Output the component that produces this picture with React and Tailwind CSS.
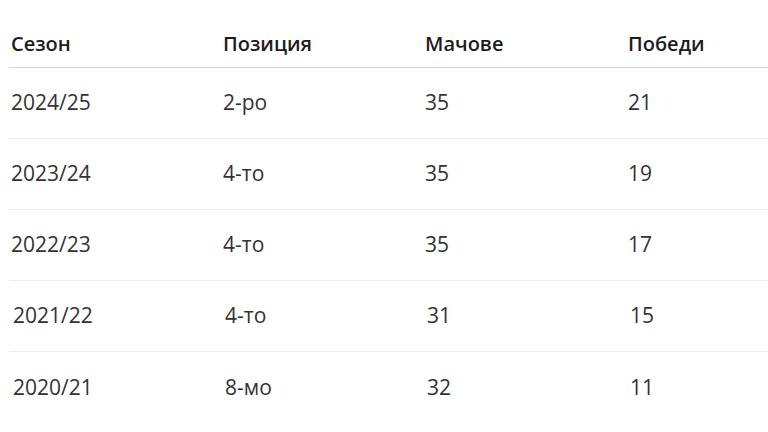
export default function App() {
  const rows = [
    { c: ["2024/25", "2-ро", "35", "21"], s: "" },
    { c: ["2023/24", "4-то", "35", "19"], s: "" },
    { c: ["2022/23", "4-то", "35", "17"], s: "" },
    { c: ["2021/22", "4-то", "31", "15"], s: "pl-[2px]" },
    { c: ["2020/21", "8-мо", "32", "11"], s: "pl-[2px]" },
  ];
  const font = { fontFamily: '"Open Sans", "Noto Sans", sans-serif' };
  return (
    <div className="w-[768px] h-[432px] bg-white overflow-hidden pt-[20px]" style={font}>
      <div className="ml-[9px]">
        <div className="grid grid-cols-[212px_202px_203px_1fr] h-[48px] items-center border-b border-[#d6d6d6] text-[20px] font-semibold text-[#1c1c1c]">
          {["Сезон", "Позиция", "Мачове", "Победи"].map((h) => (
            <div key={h} className="pl-[2px]">{h}</div>
          ))}
        </div>
        {rows.map((r, i) => (
          <div
            key={i}
            className={
              "grid grid-cols-[212px_202px_203px_1fr] h-[71px] items-center text-[21px] text-[#333333] " +
              r.s +
              (i < rows.length - 1 ? " border-b border-[#ececec]" : "")
            }
          >
            {r.c.map((c, j) => (
              <div key={j} className="pl-[2px]">{c}</div>
            ))}
          </div>
        ))}
      </div>
    </div>
  );
}
